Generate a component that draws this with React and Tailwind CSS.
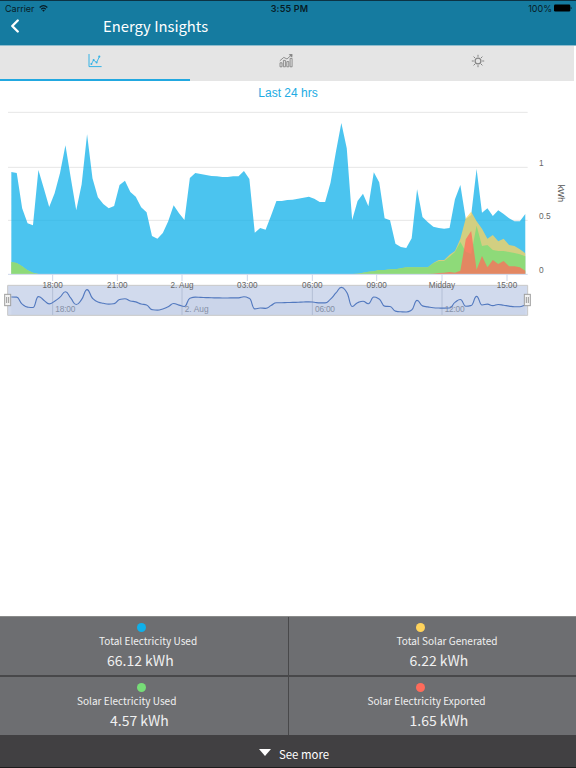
import { ChevronLeft } from 'lucide-react';

// One reading every 15 minutes. The values are chart units, measured down from the top.
const BASE = 507;
const X0 = 34;
const STEP = 16.23;

const used = [
    201, 204, 310, 355, 361, 195, 250, 306, 265, 204, 121, 220, 316, 238, 88, 220,
    277, 297, 310, 303, 240, 227, 261, 275, 307, 322, 393, 401, 384, 349, 301, 325,
    345, 219, 204, 207, 210, 213, 214, 216, 216, 214, 214, 198, 222, 383, 369, 374,
    332, 288, 288, 285, 284, 281, 278, 275, 281, 291, 291, 233, 140, 54, 130, 345,
    288, 266, 304, 202, 232, 340, 346, 416, 426, 429, 400, 253, 336, 352, 365, 369,
    371, 369, 283, 240, 342, 330, 192, 323, 310, 333, 316, 327, 340, 349, 349, 327,
];
const morning = [471, 474, 484, 496, 503, 507];
const night = Array(58).fill(BASE);
const ramp = [506, 503, 500, 499, 495, 495, 493, 493, 490, 487, 487, 487, 487, 487];
const generated = [
    ...morning, ...night, ...ramp,
    474, 465, 465, 449, 438, 401, 340, 320, 349, 371, 401, 390, 409, 401, 420, 423, 433, 445,
];
const solarUsed = [
    ...morning, ...night, ...ramp,
    475, 468, 468, 455, 441, 411, 440, 447, 362, 423, 420, 435, 438, 438, 441, 444, 448, 454,
];
const exported = [
    ...Array(78).fill(BASE),
    506, 504, 503, 501, 503, 497, 403, 378, 494, 453, 487, 465, 477, 468, 484, 484, 487, 497,
];

const px = (i) => X0 + i * STEP;

const area = (data) =>
    `M${px(0)} ${BASE} ` + data.map((y, i) => `L${px(i)} ${y}`).join(' ') + ` L${px(data.length - 1)} ${BASE}Z`;

// Spline that stays flat at local peaks and dips
const spline = (data) => {
    const ys = data.map((y) => 547 + (y - 54) * 0.197);
    const slope = ys.map((y, i) => {
        if (i === 0 || i === ys.length - 1) return 0;
        const a = y - ys[i - 1];
        const b = ys[i + 1] - y;
        return a * b <= 0 ? 0 : (2 * a * b) / (a + b);
    });
    let d = `M${px(0)} ${ys[0]}`;
    for (let i = 1; i < ys.length; i++) {
        d += ` C${px(i - 1) + STEP / 2} ${ys[i - 1] + slope[i - 1] / 2} ${px(i) - STEP / 2} ${ys[i] - slope[i] / 2} ${px(i)} ${ys[i]}`;
    }
    return d;
};

const series = [
    { data: used, color: '#0fb0ea' },
    { data: generated, color: '#ffd35c' },
    { data: solarUsed, color: '#77dd77' },
    { data: exported, color: '#ff6b5b' },
];

const xLabels = [
    [158, '18:00'], [352, '21:00'], [546, '2. Aug'], [742, '03:00'],
    [937, '06:00'], [1130, '09:00'], [1326, 'Midday'], [1521, '15:00'],
];
const navLabels = [[158, '18:00'], [546, '2. Aug'], [937, '06:00'], [1326, '12:00']];

const Handle = ({ x }) => (
    <g>
        <rect x={x - 9} y="568" width="18" height="34" fill="#f2f2f2" stroke="#a0a0a0" strokeWidth="3" />
        <path d={`M${x - 3} 576v18M${x + 3} 576v18`} stroke="#888" strokeWidth="2.5" />
    </g>
);

const Chart = () => (
    <svg viewBox="0 0 1728 660" className="block h-[220px] w-[576px] font-['Liberation_Sans',sans-serif]">
        {[22, 187, 346].map((y) => (
            <path key={y} d={`M24 ${y}H1583`} stroke="#e6e6e6" strokeWidth="3" />
        ))}
        {series.map((s) => (
            <path key={s.color} d={area(s.data)} fill={s.color} fillOpacity="0.75" />
        ))}
        <path d="M24 508H1583" stroke="#ccd6eb" strokeWidth="3" />
        {xLabels.map(([x]) => (
            <path key={x} d={`M${x} 508v20`} stroke="#ccd6eb" strokeWidth="3" />
        ))}

        {/* Navigator */}
        {navLabels.map(([x, label]) => (
            <g key={x}>
                <path d={`M${x} 542V630`} stroke="#d5d8de" strokeWidth="3" />
                <text x={x + 8} y="621" fontSize="25" fill="#999" textLength={label === '2. Aug' ? 72 : 60}>{label}</text>
            </g>
        ))}
        <path d={`${spline(used)} V631 H${X0}Z`} fill="#4572a7" fillOpacity="0.05" />
        <path d={spline(used)} fill="none" stroke="#4a74bd" strokeWidth="3.4" />
        <rect x="23" y="541" width="1560" height="90" fill="#6685c2" fillOpacity="0.3" />
        <path d="M23 541H1583M23 631H1583M23 541V631M1583 541V631" stroke="#c8c8c8" strokeWidth="3" />
        <Handle x={23} />
        <Handle x={1582} />

        {xLabels.map(([x, label]) => (
            <text key={x} x={x} y="549" fontSize="24.5" fill="#666" textAnchor="middle">{label}</text>
        ))}
        {[[182, '1'], [341, '0.5'], [503, '0']].map(([y, label]) => (
            <text key={y} x="1617" y={y} fontSize="25" fill="#666">{label}</text>
        ))}
        <text transform="translate(1673 265) rotate(90)" fontSize="26" fill="#555" textAnchor="middle">kWh</text>
    </svg>
);

const StatusBar = () => (
    <div className="grid h-[15px] grid-cols-3 items-center border-t border-[#0c3344] pl-[5px] pr-1 font-[Inter,sans-serif] text-[9px] leading-none text-[#071c26]">
        <div className="flex items-center gap-1">
            <span>Carrier</span>
            <svg viewBox="0 0 10 8" className="h-[7px] w-[9px]" fill="none" stroke="currentColor" strokeWidth="1.4">
                <path d="M.6 2.9Q5-1.3 9.4 2.9M2.4 4.8Q5 2.5 7.6 4.8" />
                <path d="M3.5 6.1Q5 4.9 6.5 6.1L5 7.8Z" fill="currentColor" stroke="none" />
            </svg>
        </div>
        <span className="pl-[2px] text-center font-semibold tracking-[0.2px]">3:55 PM</span>
        <div className="flex items-center justify-end gap-[2px]">
            <span>100%</span>
            <svg viewBox="0 0 18 8" className="h-[8px] w-[18px]" fill="#000">
                <rect x="0" y="0.5" width="16.3" height="7" rx="1.2" />
                <path d="M16.8 2.7Q18.3 4 16.8 5.3Z" />
            </svg>
        </div>
    </div>
);

const LineIcon = () => (
    <svg viewBox="0 0 14 14" className="h-[14px] w-[14px]" fill="none" stroke="#35b3e6">
        <path d="M1 0V12.6H13.6" strokeWidth="1" />
        <path d="M3.4 10L5.6 6L8.6 8.6L11.2 3" strokeWidth="0.9" />
        <g fill="#35b3e6" stroke="none">
            <circle cx="3.4" cy="10" r="1" />
            <circle cx="5.6" cy="6" r="1" />
            <circle cx="8.6" cy="8.6" r="1" />
            <circle cx="11.3" cy="2.6" r="1.1" />
        </g>
    </svg>
);

const BarsIcon = () => (
    <svg viewBox="0 0 14 14" className="h-[14px] w-[14px]" fill="none" stroke="#858585" strokeWidth="0.9">
        <path d="M1 8.8h2v4H1zM4.4 6.4h2v6.4h-2zM7.8 7.6h2v5.2h-2zM11.1 4.4h2v8.4h-2z" />
        <path d="M.8 6.8L4.8 3.4L8 5L12.4 1" />
        <path d="M10.4.6L13.1.4L12.8 3.1Z" fill="#858585" />
    </svg>
);

const SunIcon = () => (
    <svg viewBox="0 0 14 14" className="h-[14px] w-[14px]" fill="none" stroke="#858585">
        <circle cx="7" cy="7" r="2.9" strokeWidth="1.2" />
        <path d="M7 .8V2.8M7 11.2V13.2M.8 7H2.8M11.2 7H13.2M2.6 2.6L4 4M10 10L11.4 11.4M2.6 11.4L4 10M10 4L11.4 2.6" strokeWidth="1" />
    </svg>
);

const Stat = ({ label, value, dotClass, labelClass, valueClass }) => (
    <div className="flex h-[58px] flex-col items-start bg-[#6d6e71] text-[#f0f0f0]">
        <span className={`mt-[6px] h-[9px] w-[9px] shrink-0 rounded-full ${dotClass}`} />
        <span className={`mt-[1px] whitespace-nowrap text-[10.05px] leading-[16px] ${labelClass}`}>{label}</span>
        <span className={`mt-[2px] whitespace-nowrap text-[14px] leading-[19px] ${valueClass}`}>{value}</span>
    </div>
);

const App = () => {
    return (
        <div className="flex h-[768px] w-[576px] flex-col overflow-hidden bg-white font-['Noto_Sans_CJK_SC',sans-serif]">
            <header className="h-[46px] shrink-0 border-b border-[#8fbccd] bg-[#157ba0]">
                <StatusBar />
                <div className="flex h-[22px] items-center text-white">
                    <ChevronLeft className="ml-[4px] h-[22px] w-[22px]" strokeWidth={2.6} />
                    <h1 className="ml-[77px] text-[14.8px] leading-[22px]">Energy Insights</h1>
                </div>
            </header>

            <nav className="mr-[2px] grid h-[35px] shrink-0 grid-cols-[190px_192px_1fr] bg-[#e5e5e5]">
                <div className="flex justify-center border-b-2 border-[#22a8e0] pt-[8px]"><LineIcon /></div>
                <div className="flex justify-center pt-[8px]"><BarsIcon /></div>
                <div className="flex justify-center pt-[8px]"><SunIcon /></div>
            </nav>

            <div className="h-[24px] shrink-0 pt-[4px] text-center font-['Liberation_Sans',sans-serif] text-[12px] leading-[16px] text-[#22abe3]">
                Last 24 hrs
            </div>
            <Chart />

            <footer className="mt-auto bg-[#414042]">
                <div className="grid grid-cols-2 gap-x-[1px] gap-y-[2px] border-t border-[#8a8b8a] bg-[#48484a]">
                    <Stat label="Total Electricity Used" value="66.12 kWh" dotClass="ml-[137px] bg-[#0fb0ea]" labelClass="ml-[99px]" valueClass="ml-[107px]" />
                    <Stat label="Total Solar Generated" value="6.22 kWh" dotClass="ml-[127px] bg-[#ffd35c]" labelClass="ml-[108px]" valueClass="ml-[121px]" />
                    <Stat label="Solar Electricity Used" value="4.57 kWh" dotClass="ml-[137px] bg-[#77dd77]" labelClass="ml-[77px]" valueClass="ml-[110px]" />
                    <Stat label="Solar Electricity Exported" value="1.65 kWh" dotClass="ml-[127px] bg-[#ff6b5b]" labelClass="ml-[79px]" valueClass="ml-[121px]" />
                </div>
                <div className="flex h-[33px] border-b border-[#1c1c1c] pl-[259px] pt-[10px] text-white">
                    <svg viewBox="0 0 12 7" className="mt-[4px] h-[7px] w-[12px]" fill="#fff">
                        <path d="M0 0H12L6 7Z" />
                    </svg>
                    <span className="ml-[8px] text-[11.4px] leading-[18px]">See more</span>
                </div>
            </footer>
        </div>
    );
};

export default App;
